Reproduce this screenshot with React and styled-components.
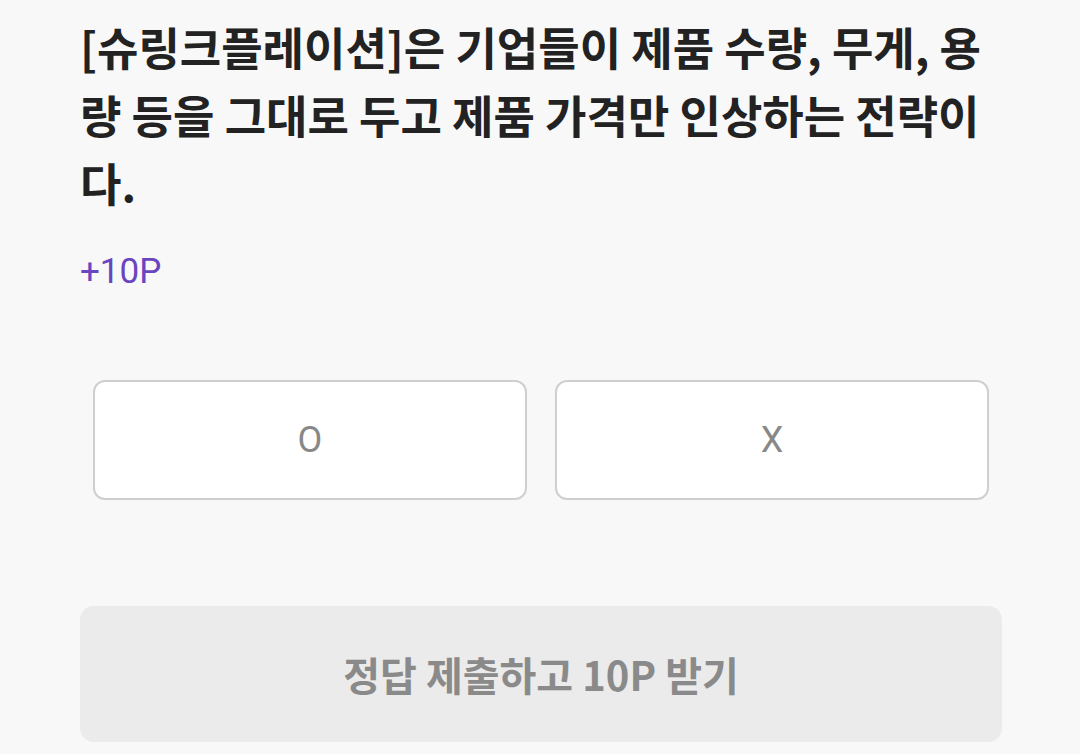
import React from "react";
import styled, { createGlobalStyle } from "styled-components";

const GlobalStyle = createGlobalStyle`
  html, body {
    margin: 0;
    padding: 0;
    background: #f8f8f8;
  }
  body {
    font-family: Roboto, "Noto Sans CJK KR", sans-serif;
  }
`;

const Page = styled.div`
  width: 1080px;
  height: 754px;
  overflow: hidden;
  box-sizing: border-box;
  padding: 13px 78px 0 80px;
  display: flex;
  flex-direction: column;
`;

const Question = styled.h1`
  margin: 0;
  width: 922px;
  font-family: "Noto Sans CJK KR", sans-serif;
  font-size: 45px;
  font-weight: 700;
  line-height: 68px;
  color: #222;
  word-break: break-all;
`;

const Reward = styled.div`
  margin-top: 35px;
  font-family: Roboto, sans-serif;
  font-size: 35px;
  line-height: 40px;
  color: #6a45c0;
`;

const Choices = styled.div`
  margin: 88px 13px 0;
  display: grid;
  grid-template-columns: 1fr 1fr;
  gap: 28px;
`;

const Choice = styled.button`
  height: 120px;
  box-sizing: border-box;
  background: #fff;
  border: 2px solid #cfcfcf;
  border-radius: 12px;
  font-family: Roboto, sans-serif;
  font-size: 36px;
  color: #888;
  display: flex;
  align-items: center;
  justify-content: center;
  padding: 0;
`;

const Submit = styled.button`
  margin-top: 106px;
  height: 136px;
  width: 100%;
  border: none;
  border-radius: 14px;
  background: #ebebeb;
  font-family: "Noto Sans CJK KR", sans-serif;
  font-size: 40px;
  font-weight: 700;
  color: #8a8a8a;
  padding: 0;
`;

export default function App() {
  return (
    <>
      <GlobalStyle />
      <Page>
        <Question>
          [슈링크플레이션]은 기업들이 제품 수량, 무게, 용량 등을 그대로 두고 제품 가격만 인상하는 전략이다.
        </Question>
        <Reward>+10P</Reward>
        <Choices>
          <Choice>O</Choice>
          <Choice>X</Choice>
        </Choices>
        <Submit>정답 제출하고 10P 받기</Submit>
      </Page>
    </>
  );
}
